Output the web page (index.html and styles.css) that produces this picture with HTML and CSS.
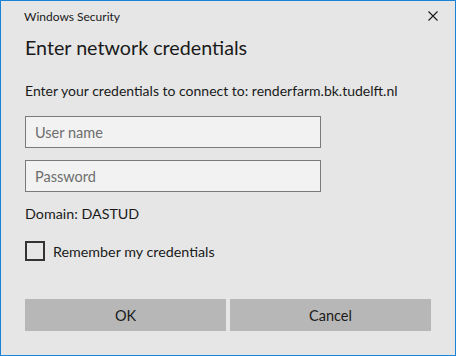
FILE: index.html
```html
<!DOCTYPE html>
<html lang="en">
<head>
  <meta charset="UTF-8">
  <title>Windows Security</title>
  <link rel="stylesheet" href="styles.css">
</head>
<body>
  <div class="window">
    <div class="titlebar">
      <span class="title">Windows Security</span>
      <span class="close">
        <svg width="10" height="10" viewBox="0 0 10 10"><path d="M0.5 0.5L9.5 9.5M9.5 0.5L0.5 9.5" stroke="#1a1a1a" stroke-width="1.1" fill="none"/></svg>
      </span>
    </div>
    <div class="content">
      <h1 class="heading">Enter network credentials</h1>
      <p class="info">Enter your credentials to connect to: renderfarm.bk.tudelft.nl</p>
      <input type="text" class="field field-user" placeholder="User name">
      <input type="password" class="field field-pass" placeholder="Password">
      <p class="domain">Domain: DASTUD</p>
      <label class="remember">
        <span class="box"></span>
        <span>Remember my credentials</span>
      </label>
      <div class="buttons">
        <button class="btn">OK</button>
        <button class="btn">Cancel</button>
      </div>
    </div>
  </div>
</body>
</html>
```

FILE: styles.css
```css
* {
  margin: 0;
  padding: 0;
  box-sizing: border-box;
}
body {
  font-family: Lato, "Liberation Sans", Arial, sans-serif;
  color: #1a1a1a;
  background: #e6e6e6;
}
.window {
  width: 456px;
  height: 356px;
  border: 1px solid #1883d7;
  background-color: #e6e6e6;
}
.titlebar {
  display: flex;
  align-items: center;
  justify-content: space-between;
  height: 30px;
  padding-left: 23px;
}
.title {
  font-size: 12px;
}
.close {
  display: flex;
  align-items: center;
  justify-content: center;
  width: 44px;
  height: 30px;
}
.content {
  padding: 0 24px;
}
.heading {
  margin-top: 3px;
  font-size: 19.7px;
  font-weight: normal;
  line-height: 28px;
}
.info,
.domain {
  font-size: 14.3px;
  line-height: 20px;
}
.info {
  margin-top: 19px;
  font-size: 14px;
}
.field {
  display: block;
  width: 296px;
  height: 32px;
  margin-top: 15px;
  padding: 0 9px;
  border: 1px solid #7a7a7a;
  background-color: #f2f2f2;
  font-family: inherit;
  font-size: 14.5px;
  outline: none;
}
.field::placeholder {
  color: #6d6d6d;
}
.field-pass {
  margin-top: 12px;
}
.domain {
  margin-top: 12px;
}
.remember {
  display: flex;
  align-items: center;
  height: 20px;
  margin-top: 17px;
  font-size: 14.3px;
}
.remember .box {
  width: 20px;
  height: 20px;
  margin-right: 8px;
  border: 2px solid #333;
}
.buttons {
  display: flex;
  gap: 4px;
  margin-top: 38px;
}
.btn {
  flex: 1;
  height: 32px;
  border: none;
  background-color: #b7b7b7;
  color: #1a1a1a;
  font-family: inherit;
  font-size: 14.5px;
}
```
